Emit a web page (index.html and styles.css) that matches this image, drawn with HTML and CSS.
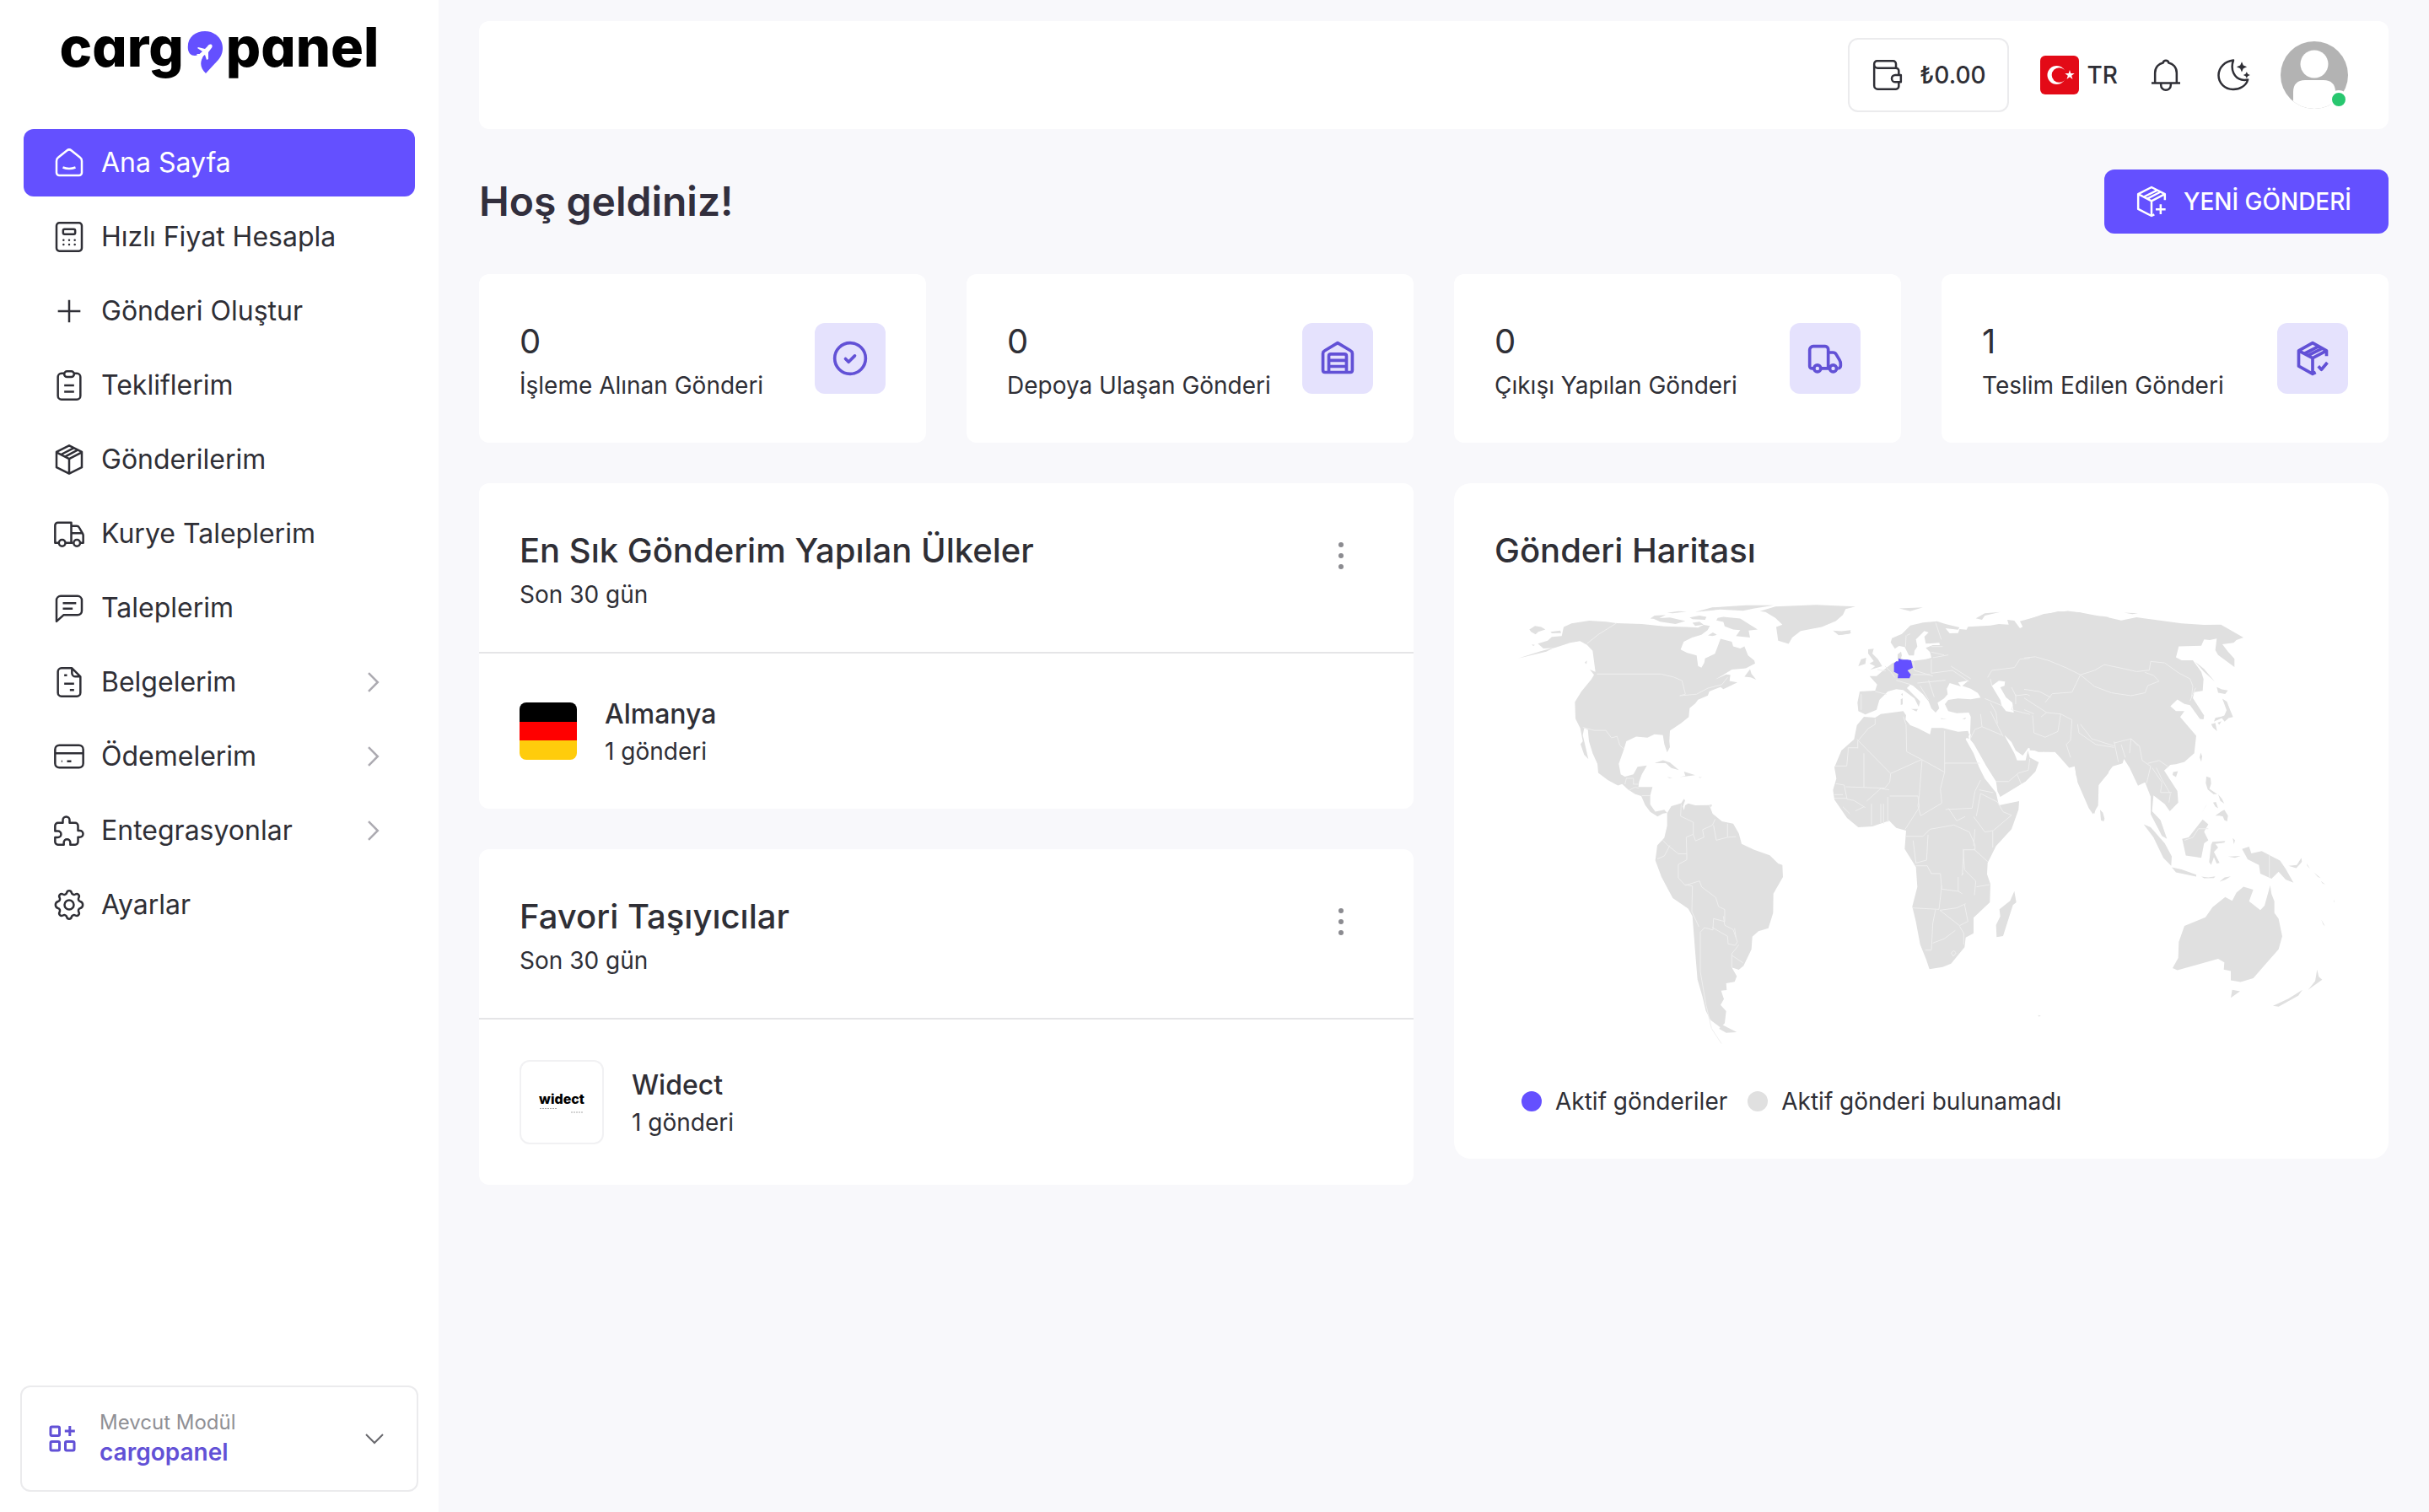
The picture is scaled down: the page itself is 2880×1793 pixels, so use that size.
FILE: index.html
```html
<!DOCTYPE html>
<html lang="tr">
<head>
<meta charset="utf-8">
<meta name="viewport" content="width=device-width, initial-scale=1">
<title>cargopanel</title>
<link rel="stylesheet" href="styles.css">
</head>
<body>
<div class="layout">
  <aside class="sidebar">
    <a class="logo" href="#" aria-label="cargopanel"><span>carg</span><svg class="logo-pin" viewBox="0 0 42 52" aria-hidden="true"><path d="M1 23C-1 9 9 1 21 1c12 0 21 9 21 20 0 7-3 12-7 16L22 51c-5-5-7-10-5-16 1-4 4-6 3-9-2-3-5 4-11 4-5 0-7-3-8-7z" fill="#6450ff"/><path d="M29 17c-2-1-4 0-5 2l-3 3-8-2-1 1 6 4-3 3-3 0-1 1 4 2 1 4 1-1 1-3 3-2 2 6 2-1 0-8 3-4c2-2 2-4 1-5z" fill="#fff"/></svg><span>panel</span></a>
    <nav class="nav">
      <a class="nav-item active" href="#"><svg class="icon" viewBox="0 0 24 24"><path d="M3 10.800c0-1 .4-1.900 1.200-2.500L10.400 3.300a2.500 2.500 0 0 1 3.200 0l6.200 5c.8.600 1.200 1.500 1.200 2.500V19a2 2 0 0 1-2 2H5a2 2 0 0 1-2-2zM7.500 15.300c2.600 1 6.400 1 9 0"/></svg><span>Ana Sayfa</span></a>
      <a class="nav-item" href="#"><svg class="icon" viewBox="0 0 24 24"><rect x="3" y="2" width="18" height="20" rx="2"/><rect x="7.700" y="6.500" width="8.600" height="3.500" rx="1"/><path stroke-linecap="round" d="M8 14.200v.01M12 14.200v.01M16 14.200v.01M8 17.400v.01M12 17.400v.01M16 17.400v.01"/></svg><span>Hızlı Fiyat Hesapla</span></a>
      <a class="nav-item" href="#"><svg class="icon" viewBox="0 0 24 24"><path d="M12 4v16M4 12h16"/></svg><span>Gönderi Oluştur</span></a>
      <a class="nav-item" href="#"><svg class="icon" viewBox="0 0 24 24"><path d="M8.500 3.500H6.500a2.500 2.500 0 0 0-2.500 2.500V19.500a2.500 2.500 0 0 0 2.500 2.500h11a2.500 2.500 0 0 0 2.500-2.500V6a2.500 2.500 0 0 0-2.500-2.500h-2M8.500 12h7M8.500 16.500h7"/><rect x="8.500" y="2" width="7" height="4" rx="2"/></svg><span>Tekliflerim</span></a>
      <a class="nav-item" href="#"><svg class="icon" viewBox="0 0 24 24"><path d="M12 2l9 4.500v11L12 22l-9-4.500v-11zM3 6.800l9 4.700 9-4.700M12 11.500V22M6.200 8.400l9-4.600M9 10l9-4.800"/></svg><span>Gönderilerim</span></a>
      <a class="nav-item" href="#"><svg class="icon" viewBox="0 0 24 24"><path d="M4.500 18.500H2V6a2 2 0 0 1 2-2h9.500v14.500h-4M13.500 6.500h3.800a2 2 0 0 1 1.800 1l2.600 4.500c.2.400.3.800.3 1.200v5.300h-2M13.500 11.500h8M14.500 18.500h-1"/><circle cx="7" cy="18.500" r="2.300"/><circle cx="17.500" cy="18.500" r="2.300"/></svg><span>Kurye Taleplerim</span></a>
      <a class="nav-item" href="#"><svg class="icon" viewBox="0 0 24 24"><path d="M3 21.500V6.500a3 3 0 0 1 3-3h12a3 3 0 0 1 3 3v7.500a3 3 0 0 1-3 3H8zM7.500 8.500h9.500M7.500 12.500h7"/></svg><span>Taleplerim</span></a>
      <a class="nav-item" href="#"><svg class="icon" viewBox="0 0 24 24"><path d="M14 2H6.500A2.500 2.500 0 0 0 4 4.500v15A2.500 2.500 0 0 0 6.500 22h11a2.500 2.500 0 0 0 2.500-2.500V8zM14 2v3.500A2.500 2.500 0 0 0 16.500 8H20M8.500 7h2M8.500 13h7M12.500 17.500h3"/></svg><span>Belgelerim</span><svg class="chevron" viewBox="0 0 24 24"><path d="M9 5.500l6.500 6.500L9 18.500"/></svg></a>
      <a class="nav-item" href="#"><svg class="icon" viewBox="0 0 24 24"><rect x="2" y="4" width="20" height="16" rx="3"/><path d="M2 9.700h20M6.500 15.500h.6M10.500 15.500h3"/></svg><span>Ödemelerim</span><svg class="chevron" viewBox="0 0 24 24"><path d="M9 5.500l6.500 6.500L9 18.500"/></svg></a>
      <a class="nav-item" href="#"><svg class="icon" viewBox="0 0 24 24"><path d="M2 9.500V8.500a2 2 0 0 1 2-2h3.500V4.500a2.300 2.300 0 0 1 4.800 0v2h4a2 2 0 0 1 2 2v3.500h1.300a2.300 2.300 0 0 1 0 4.600h-1.300V20a2 2 0 0 1-2 2h-3.500v-1.500a2.300 2.300 0 0 0-4.600 0V22H4a2 2 0 0 1-2-2v-3.200h2a2.200 2.200 0 0 0 0-4.500H2z"/></svg><span>Entegrasyonlar</span><svg class="chevron" viewBox="0 0 24 24"><path d="M9 5.500l6.500 6.500L9 18.500"/></svg></a>
      <a class="nav-item" href="#"><svg class="icon" viewBox="0 0 24 24"><circle cx="12" cy="12" r="3.300"/><path d="M10.300 3.400c.5-1.900 2.900-1.900 3.400 0 .3 1.200 1.600 1.700 2.700 1.100 1.700-1 3.400.7 2.400 2.400-.6 1.100-.1 2.400 1.100 2.700 2.400.8 2.400 4 0 4.800-1.200.3-1.700 1.600-1.100 2.700 1 1.700-.7 3.400-2.400 2.400-1.100-.6-2.400-.1-2.700 1.100-.5 1.900-2.900 1.900-3.400 0-.3-1.200-1.600-1.700-2.700-1.100-1.700 1-3.400-.7-2.400-2.400.6-1.100.1-2.400-1.100-2.700-2.400-.8-2.400-4 0-4.800 1.200-.3 1.700-1.600 1.100-2.700-1-1.700.7-3.400 2.400-2.400 1.100.6 2.400.1 2.700-1.100z"/></svg><span>Ayarlar</span></a>
    </nav>
    <button class="module" type="button">
      <svg class="module-icon" viewBox="0 0 32 32"><rect x="2" y="2" width="10.500" height="10.500" rx="1.500"/><rect x="2" y="19.500" width="10.500" height="10.500" rx="1.500"/><rect x="19.500" y="19.500" width="10.500" height="10.500" rx="1.500"/><path d="M24.800 1v12M18.800 7h12"/></svg>
      <span class="module-text"><span class="module-label">Mevcut Modül</span><strong class="module-name">cargopanel</strong></span>
      <svg class="module-chevron" viewBox="0 0 24 24"><path d="M2 7l10 10L22 7"/></svg>
    </button>
  </aside>

  <main class="main">
    <header class="topbar">
      <button class="wallet" type="button"><svg class="icon" viewBox="0 0 24 24"><path d="M18 6.800V4a2 2 0 0 0-2-2H4.500a2 2 0 0 0-2 2v15.500a2.500 2.500 0 0 0 2.500 2.500h13a2 2 0 0 0 2-2V17M2.500 4.500a2.500 2.500 0 0 0 2.500 2.500h13a2 2 0 0 1 2 2V12M21.500 12v5h-4a2.500 2.500 0 0 1 0-5z"/></svg><span>₺0.00</span></button>
      <button class="lang" type="button"><svg class="flag-tr" viewBox="0 0 46 46" aria-hidden="true"><rect width="46" height="46" rx="6" fill="#e30a17"/><circle cx="19.500" cy="23" r="11" fill="#fff"/><circle cx="22.500" cy="23" r="8.800" fill="#e30a17"/><path d="M35 17l1.300 4.100h4.400l-3.500 2.600 1.300 4.200-3.500-2.600-3.500 2.600 1.300-4.200-3.500-2.600h4.400z" fill="#fff"/></svg><span>TR</span></button>
      <button class="icon-button" type="button" aria-label="Bildirimler"><svg class="icon" viewBox="0 0 24 24"><path d="M1.800 17.700h20.400M4.300 17.500V10.500C4.300 6.500 7 3.800 10 3.300c.2-1 1-1.600 2-1.600s1.800.6 2 1.600c3 .5 5.700 3.200 5.700 7.200v7M8.500 18v1.200a3.500 3.500 0 0 0 7 0V18"/></svg></button>
      <button class="icon-button" type="button" aria-label="Tema"><svg class="icon" viewBox="0 0 24 24"><path d="M12 1.500C6 2.200 1.500 6.500 1.500 12.200c0 5.600 4.500 10 10.300 10 4.800 0 9.300-2.500 10.500-6.900-1.500.3-3 .4-4.500 0-5-1.200-8.200-7-5.800-13.800z"/><path class="solid" d="M18 2.500l1.100 2.600 2.600 1.100-2.600 1.100-1.100 2.600-1.100-2.600-2.600-1.100 2.600-1.100zM21.500 9.700l.8 1.600 1.600.7-1.600.7-.8 1.600-.8-1.600-1.600-.7 1.600-.7z"/></svg></button>
      <button class="avatar" type="button" aria-label="Hesap"><svg viewBox="0 0 80 80"><defs><clipPath id="round"><circle cx="40" cy="40" r="40"/></clipPath></defs><g clip-path="url(#round)"><rect width="80" height="80" fill="#b3b3b3"/><circle cx="40" cy="27" r="16.500" fill="#fff"/><path d="M15 80V60c0-9 5-14 14-14h22c9 0 14 5 14 14v20z" fill="#fff"/></g></svg><span class="status"></span></button>
    </header>

    <div class="page-head">
      <h1>Hoş geldiniz!</h1>
      <button class="primary" type="button"><svg class="icon" viewBox="0 0 24 24"><path d="M21.500 11V6.700L12 1.800 2.500 6.700v10.600l9.500 4.900 2-1M2.500 6.700l9.500 4.900 9.500-4.900M12 11.600v10.600M6.500 8.700L16 4M9 10l9.500-4.900M18.500 14v7M15 17.500h7"/></svg><span>YENİ GÖNDERİ</span></button>
    </div>

    <section class="stats">
      <article class="card stat"><div><p class="stat-value">0</p><p class="stat-label">İşleme Alınan Gönderi</p></div><span class="stat-icon"><svg viewBox="0 0 24 24"><circle cx="12" cy="12" r="10"/><path stroke-linecap="round" d="M9 12.300l2 2 4-4"/></svg></span></article>
      <article class="card stat"><div><p class="stat-value">0</p><p class="stat-label">Depoya Ulaşan Gönderi</p></div><span class="stat-icon"><svg viewBox="0 0 24 24"><path d="M2.500 19.700V8.700c0-.7.400-1.300 1-1.600L12 2l8.500 5.100c.6.300 1 .9 1 1.600v11c0 .8-.6 1.300-1.300 1.300H3.800c-.7 0-1.300-.5-1.300-1.300zM6.300 21V10.500c0-.8.500-1.300 1.300-1.300h8.800c.8 0 1.300.5 1.300 1.300V21M6.300 13.300h11.400M6.300 17.200h11.400"/></svg></span></article>
      <article class="card stat"><div><p class="stat-value">0</p><p class="stat-label">Çıkışı Yapılan Gönderi</p></div><span class="stat-icon"><svg viewBox="0 0 24 24"><path d="M4.500 18.500H3.500a1.500 1.500 0 0 1-1.500-1.500V6.500A2.300 2.300 0 0 1 4.300 4.200h7.700a2 2 0 0 1 2 2v12.300h-4.500M14 8.200h3c1 0 1.700.4 2.200 1.300l2.100 3.500c.5.800.7 1.500.7 2.400v1.400a1.700 1.700 0 0 1-1.700 1.700"/><circle cx="7" cy="18.500" r="2.200"/><circle cx="17.200" cy="18.500" r="2.200"/></svg></span></article>
      <article class="card stat"><div><p class="stat-value">1</p><p class="stat-label">Teslim Edilen Gönderi</p></div><span class="stat-icon"><svg viewBox="0 0 24 24"><path d="M21 10.500V7L12 2 3 7v10l9 5 2-1M3 7l9 4.800L21 7M12 11.800V22M6.500 9L16 4.200M9 10.200l9.500-4.800M15.700 17l2 2.200 3.800-4.500"/></svg></span></article>
    </section>

    <div class="columns">
      <div class="stack">
        <section class="card">
          <header class="card-head"><div><h2>En Sık Gönderim Yapılan Ülkeler</h2><p>Son 30 gün</p></div><button class="more" type="button" aria-label="Menü"><svg viewBox="0 0 8 34"><circle cx="4" cy="4" r="3"/><circle cx="4" cy="17" r="3"/><circle cx="4" cy="30" r="3"/></svg></button></header>
          <div class="entry"><svg class="flag-de" viewBox="0 0 68 68" aria-hidden="true"><defs><clipPath id="fr"><rect width="68" height="68" rx="8"/></clipPath></defs><g clip-path="url(#fr)"><path d="M0 0h68v23H0z"/><path d="M0 23h68v22H0z" fill="#f00"/><path d="M0 45h68v23H0z" fill="#ffcc0c"/></g></svg><div><h3>Almanya</h3><p>1 gönderi</p></div></div>
        </section>
        <section class="card">
          <header class="card-head"><div><h2>Favori Taşıyıcılar</h2><p>Son 30 gün</p></div><button class="more" type="button" aria-label="Menü"><svg viewBox="0 0 8 34"><circle cx="4" cy="4" r="3"/><circle cx="4" cy="17" r="3"/><circle cx="4" cy="30" r="3"/></svg></button></header>
          <div class="entry"><span class="brand">widect<svg viewBox="0 0 54 8" aria-hidden="true"><path d="M1 1.500h20M38 6h14"/></svg></span><div><h3>Widect</h3><p>1 gönderi</p></div></div>
        </section>
      </div>

      <section class="card map-card">
        <h2>Gönderi Haritası</h2>
        <svg class="map" viewBox="0 0 1012 601" role="img" aria-label="Gönderi Haritası">
          <!-- Americas -->
          <g transform="translate(8 5) scale(.33333 .35714)">
            <path d="M130 205l35-10 15-12 35-3 7-30 28-12 63-9 60 3 37 5 90 3 80 8 80 2 40 2 20-9 22 3-8 14-22 16-33 9-30 14-11 26 22 10 35 9 5 35 12 6 10-16 3-15 35-15 10-25 10-25 40 10 5 15 25 7 15-7 13 30 22 17 3 10-33 16-50 4-30 18-30 16 40-18 15 2-3 20 28 5-50 22-10-7-40 15-5 13-35 14-10 13-20 15-3 30-27 20-40 25-2 35 2 20-10 17-10-27-5-30-30-3-25 11-40-3-35 15-10 30-17 45 7 35 15 8 30-8 15-25 33-4-18 29-10 25-2 17h50l-8 28v30l18 24 32-6 10 10-15 2-19 10-26-15-18-23-14-30-23-7-25-15-20-18-15 5-35-17-35-25-3-30-17-35-13-40-4-38-13-5-5 23 10 40 10 40-15-15-13-35 8-10-9-43-17-32-2-55 23-35 35-40 10-15-15-18 20 8-5-35-5-35-20-20-25-12-35 5-55 17-40 2z"/>
            <path d="M60 254l80-24 50-12-30 14zM100 158l20-12 22 4 15 8-25 8-10 8-16-8zM175 166l35-4 3 8-33 1zM297 268l8-7-2 12zM108 208l12 1-6 4z"/>
            <path d="M590 768l15-23 35-10 10-15 4 6-8 20 4 12 4-16 11-6 25 6 50-1 12 29 33 25 40 8 20 32 10 35 45 20 55 18 30 27 15 5 2 40-34 55-1 65-17 50-35 10-22 18-3 42-28 55-17 13-25-8 18 30-8 18-30 5 2 22-20 2 10 28-12 20 20 20-5 40-15 15-35-25-17-30-13-50-17-55-8-90-10-120-15-25-55-35-40-70-22-55 7-50 25-25 10-40zM785 1470l53 25-38 2-25-13zM740 740l10 0-4 9z"/>
            <path d="M920 97l55-15 145-6 140 6-35 8-10 20-25 20-50 20-75 13-30 22-13 21-37-11-7-45 22-8-25-22-35-20z"/>
            <path d="M1180 162l30 2 33-4-3 12-40 5zM545 602l30-10 25 8 32 25-27-7-20-16zM650 630l40 12-55 6 20-4zM590 648l20 2-12 2zM702 648l12 1-8 2zM885 290l5 15 17 20-20-8-22-2z"/>
            <path d="M770 120l20-4 60 6 62 36-32 4 5 23-50-5 15-20-25-2-30-10-5-15-25-5zM540 122l60-4 55 12-35 10-55-8zM530 122l15-10 40-2-30 14zM735 178l18-10 14 8-15 4zM690 100l60-15 120-7h100l-70 10-40 8-80-4zM590 103l40-6 30 2-50 5zM670 118l35-6 25 4-5 10-45-2zM680 136l25-4 15 10-30 4z"/>
            <path d="M1415 88l85-3-45 12z"/>
            <g class="borders"><path d="M410 137l-65 38-40 30M340 306h228l45 10 30 12 12 45-20 5 60-5 40-20 50-12 20-24M290 483l40 10h42l20 25 20-5 10 30 15 12M440 672l5-20 25 0v20h18M455 692l20-10 15 3M500 710l30 0M640 738l-2 40 45 20v40l-25 10 2 55-30 0-40-30-15-15M683 838l8 22 30-12-5-25 35-15 10-20M755 808l10 50 40-10 0-45M805 848l30-2M600 875l-20 35-25 10M660 903v20l-30 15v45l25 25 50-15 8 20 50 35 10 30 22 10v40l-40-10-2 38-30-8-15 15v130l20 110 20 80 35 50M655 1005l25 5-2 85 25 50M790 1110l5 30 30 15 15 40-8 12-25-5-2-25-55-30M830 1150l5 30M845 1205l-25 30 0 45M820 1240l40 25"/></g>
          </g>
          <!-- Europe, western Asia and Africa -->
          <g transform="translate(368 5) scale(.33333)">
            <path d="M470 140l30 10 50 12-5 8-45-5 15 18 30-1 5-14 25 2 5-10 80-5 30-5 35 2-5-17 25 3 20 27 10-5-10-20 65-18 70-17 75 3 75 14 30 3v555l-38 45v50l-12 50-15-15-30-80-20-40-5-35-15 3-25-23-30-30h-60l-35-15-20 28-25-18-15-30-25-25 10 20 25 45 10 25h30l8-35 7 25 32 17-12 33-35 35-90 55-10-20-5-35-35-55-25-45-20-35-13-15 3-80-7-15-43 2-30-7-12-25 12-15 35-5 45 3 35-6-10-17-25-15-30-10 23-20-38 8 10 14-40-12-10 20 3 20-13 15-23 15 6 20-13 15-15-15-10-25-20-25-35-30-10-5-12 13 47 47-5 20-15-30-40-30-25-3-30 8-30 30-10 35-40 17-25-12-3-30 8-40 55-3 7-22-27-30h25l30-25 25-20 20-10 10-10 10 5 30 7 50-7 20-5-5-20-15-15 25-10h25l-2-8-48 3-5-25 15-15-15-5-30 30 5 25-10 15-2 17h-18l-15-30-20-4-15 10-15-23 5-15 35-15 30-30 45-10z"/>
            <path d="M330 258l12-10 3 14-5 14h-10zM225 240l20-2-5 17 20 20 15 25-43 13 18-13-20-10 15-8-20-27zM190 300l10-25 18-5-3 22zM608 130l32-18 55-5-55 13-10 15zM342 400l6-4v10zM341 418l7-4v22l-7 2zM378 452h24l-5 9zM483 485l22 2-20 1zM560 487l14-4-5 6zM103 176l25 3 33-4 3 7-35 6z"/>
            <path d="M210 480l40 3 20-13 80-10 10 15-2 15 17 20 25 10 45 23 5-23h40l55 13 35-3 10 30-15-5-3 5 28 50 20 50 20 40 40 50 10 45 72-15-2 30-25 70-55 60-30 60-2 40 12 35-2 65-58 55v55l-28 15-4 35-48 58-30 12-47 8-11-33-22-55-15-80-13-55 18-70-5-70-40-65 5-65-35-10-25-25-60 20-50 3-40-33-45-65-5-35 12-40-7-40 25-60 45-40 10-50zM745 1100l7 40-12 10-35 110-23 4-2-44 15-30-3-25 38-30z"/>
            <path class="water" d="M665 370l25-18 22 3-2 15-15 5 20 35 23 20 5 35-28-5-15-20-5-20-15-25zM568 550l18 20-4-22 8-8-2 32z"/>
            <g class="borders">
              <path d="M185 560l120 122-3 30-18 22-138-5M210 610v122M188 590l-34 0v10l-5 55h-42M250 487v20l-25 15-37 45v25M305 682l110-50-53-28-2-95-10-30M415 632l82 45V530M497 645h125M497 677l-15 60 5 50-75 45-10-35 5-40 10-125M110 718l30 5 10 50 25 5 40 25M300 740l-30-5-50 45M302 762h100l5 40-50 78M105 757h30M105 770h45M280 790v70M237 790v75M270 790v68M295 765v90M210 800l-30 15M135 800l25 25M360 905h60l25-25 85-15 55 25 20 45 0 18h-40l-5 90M385 920l10 80 38-10 5-90M395 1010h40l15 28h32l5 55 60 8M545 1050v50l15 10M563 950l5 75 40 40-5 50M487 1080l-10 85-95-5M465 1165l-10 50-5 95-22 0M480 1168l60-8 32-15M480 1168l70 55 30-15-12-60M550 1225l15 25 0 40M455 1285l40-15 40-30M600 950l50 45M610 1085l48-8M668 885v60M600 835l40 55 30-5 65-55-30-12-20-35-60-30-15 80M510 805l30 45 30-15M500 810l95-5 10-60 20-40M520 1320l10-8 8 8-10 12zM620 740l50 10M563 1035l-5 10M605 880l-5 60"/>
              <path d="M680 710h45l35-30 35-10 5-40M755 685l15 35M590 555l15-30 25-10 70 30M625 470l5 45M660 460l45 90M360 190l-2 40M375 185l-12 5M465 145l20 60M450 230l40 0M450 250l45 10M455 270l55-10M385 280l5 35 65 20M450 275v50l75-10 60 40M520 300l70 45M385 330l60 0M400 360l100-10M440 350l20 60M410 370l30 50M325 350l50 15M258 312l30 5M285 300l20 20 15 20M250 390l40 10M200 400v55M385 290l-10-10M650 340l15-25 80-10 20-30 60-5 65 25 80 20M660 345l5 25M735 375l15 30 40-5 80 45M740 440l-5 15 80 20M815 470l90 0 0 40-25 45-50 0-15-80M975 330l-30 60-60 15-20 35M850 555v50M905 470l40 30-5 60-20 20 20 50M960 490l50 60 70 25M980 505l45 60 55 20M640 415l60 25M660 430l20 35 5 40M750 400v35"/>
            </g>
            <path class="active" d="M333 272l12 5 20 0 13 2 6 26-19 10 12 15-5 13h-42l2-15-15-8v-30l8-7 8 0z"/>
          </g>
          <!-- Eastern Asia and Oceania -->
          <g transform="translate(628 5) scale(.33333 .34439)">
            <path d="M205 107l-15 11 90 0 65 15 55-11 60 8 100 13 80 5 60-1 80 45-25 8-10 10-40 5 20 25 23 25v28l-58-41-10-17 5-40-25 5-20-2-10 22-80 2-10 38 20 10h40l30 40 8 25-3 40-30 5-5 20 40 60-2 13-13-1-35-47-20-5-25-15-25 23 20 17h30l-15 20 57 65-7 60-35 30-30 8-20 2-22 20 47 70 3 40-30 30-18-25-40-30-5 55 30 30 23 65-18-10-40-75v-60l-20-50-25 12-30-62-20-30-5 15-35 10-50 65-2 70-18 30-15-20-40-90-10-55-20 5-50-55-90-5V128l50-18 85-10zM50 86l70 7M355 106l50 2-20 3z"/>
            <path d="M608 275l32 25 38 43-38-33zM685 362l18 8 22 4-10 12-25-4zM705 402l16 10 12 30 10 23-16 4-14 12-10-12-28 12 5-13 22-4 10-4 8-18zM665 490l15-4 6 28-14-12zM688 485l14-5-8 12zM628 588l5 12-3 20-6-15zM530 655l17-3-7 20-12-7zM270 785l10 10 6 20-3 10-10-4zM648 670l15 5 2 20-6 18 28 18-14 0-20-16-7-22zM690 732l14 16 8 16-14-10zM672 760l10-2 8 22-10-6zM680 805l22-15 10-5 13 20-3 20-10-5-5-12-12-3zM650 765l-18 30 14-22z"/>
            <path d="M425 835l25 10 50 55 25 45-2 33-28-28-35-70zM525 983l35 7 52 18v7l-72-15zM562 885l23-5 50-62 20 17-15 25 15 30-15 10-10 50-55-8zM665 905l5-10 45-3-3 6-32 4 10 13-15 15 20 38-10 2-10-22-10 27-7-10zM630 1015l25 3 25-4-5 6-35 1zM695 1032l18-14 22-4-20 12zM742 882l8 8-4 14zM725 946l45-2-20 6zM775 920l25-8 8 23 37-8 65 33 20 28 28 48-28-11-25-27-25 24-40-17-5-30-40-20zM940 978l30-3 16-25 2 14-20 22zM1005 970l12 18-10-10zM1030 1000l25 20-10-4zM1055 1030l16 12-10-4z"/>
            <path d="M875 1045l5 30 10 25v40l15 20 13 60-13 45-45 50-45 50-45 13-35-6v-32l-25-5 2-25-22-12-80 22-65 17-17-7 20-35 2-55 20-55 75-30 25-35 45-35 25 13 15-28 25-20 35 10-15 40 40 30 15-15zM740 1405l28 5-33 22zM1042 1335l6 25 12 10-50 35 25-30zM990 1405l-15 20-70 38-20-3 55-25zM1057 1163l14 24-8-8zM1102 1095l2 8-3-2zM50 1492l10 3-9 2z"/>
            <g class="borders"><path d="M0 262l40-4 50 14 60 24 50 24 50-15 35-20 60 12 55 12 45-5 5-30 50 5 50 35 40 20 10 25-5 40M200 320l50 40 60 22 70 10 50-10 10-25 40-15-20-20-30-10M200 320l-30 60-70 5-25 30M30 460l5 60 40 15 45-20 10-60-50-5-20 15M130 455l40 20-5 70-15 15 15 45M200 490l40 50 80 25M190 490l5 30 60 40 65 10M320 550l15 70M345 560l15 45M320 555l60-15 25 25M375 590l5-50 30 25 10 50 30 20-15 60M440 625l40-10 30 20M470 640l20 40 30 50-5 30M455 640l35 50-5 35 40 0M590 410l20-45M570 890l30-10 20-30 35 0M872 940v80M0 370l55 8 40 20M0 400l80 50M0 440l35 15"/></g>
          </g>
        </svg>
        <ul class="legend"><li><span class="dot dot-active"></span>Aktif gönderiler</li><li><span class="dot"></span>Aktif gönderi bulunamadı</li></ul>
      </section>
    </div>
  </main>
</div>
</body>
</html>
```
FILE: styles.css
```css
* { box-sizing: border-box; margin: 0; padding: 0; }

:root {
  --primary: #6450ff;
  --accent: #6251d6;
  --text: #2f2f36;
  --border: #ebebed;
  --page: #f8f8fb;
}

body {
  background: var(--page);
  color: var(--text);
  font-family: Inter, "Noto Sans", sans-serif;
  font-size: 28px;
  line-height: 44px;
}

button { font: inherit; color: inherit; background: none; border: 0; cursor: pointer; }
a { color: inherit; text-decoration: none; }
ul { list-style: none; }
svg { display: block; flex: none; }

.icon { width: 40px; height: 40px; fill: none; stroke: currentColor; stroke-width: 1.5; stroke-linejoin: round; }
.icon .solid { fill: currentColor; stroke: none; }

.layout { display: flex; min-height: 100vh; }

.sidebar {
  width: 520px;
  flex: none;
  display: flex;
  flex-direction: column;
  background: #fff;
  padding: 16px 24px 24px;
}

.logo {
  display: flex;
  align-items: center;
  justify-content: center;
  gap: 4px;
  height: 80px;
  font-size: 65px;
  font-weight: 800;
  line-height: 80px;
  color: #000;
  font-feature-settings: "cv11";
}
.logo-pin { width: 42px; height: 52px; margin-top: 12px; }

.nav { display: flex; flex-direction: column; gap: 8px; padding: 57px 4px 0; }
.nav-item {
  display: flex;
  align-items: center;
  gap: 18px;
  height: 80px;
  padding: 0 30px 0 34px;
  border-radius: 12px;
  font-size: 32px;
}
.nav-item.active { background: var(--primary); color: #fff; }
.chevron { width: 40px; height: 40px; margin-left: auto; fill: none; stroke: #acaab1; stroke-width: 1.5; }

.module {
  display: flex;
  align-items: center;
  gap: 28px;
  height: 126px;
  margin-top: auto;
  padding: 0 32px;
  border: 2px solid var(--border);
  border-radius: 12px;
  text-align: left;
}
.module svg { fill: none; stroke-width: 2; }
.module-icon { width: 32px; height: 32px; stroke: var(--accent); }
.module-icon rect, .module-icon path { stroke-width: 3; }
.module-text { display: flex; flex-direction: column; padding-bottom: 4px; }
.module-label { font-size: 24px; line-height: 36px; color: #909095; }
.module-name { font-size: 28px; line-height: 34px; font-weight: 600; color: var(--accent); }
.module-chevron { width: 24px; height: 24px; margin-left: auto; margin-right: 6px; stroke: #68686d; }

.main { flex: 1; min-width: 0; display: flex; flex-direction: column; gap: 48px; padding: 25px 48px 48px; }

.topbar {
  display: flex;
  align-items: center;
  justify-content: flex-end;
  height: 128px;
  padding: 0 48px;
  background: #fff;
  border-radius: 12px;
  font-weight: 500;
}
.wallet {
  display: flex;
  align-items: center;
  gap: 18px;
  height: 88px;
  padding: 0 25px;
  border: 2px solid var(--border);
  border-radius: 12px;
  font-weight: 500;
}
.lang { display: flex; align-items: center; gap: 10px; margin: 0 37px 0 37px; font-weight: 500; }
.flag-tr { width: 46px; height: 46px; }
.icon-button { margin-right: 40px; }
.icon-button + .avatar { margin-left: -4px; }
.avatar { position: relative; width: 80px; height: 80px; }
.avatar svg { width: 80px; height: 80px; }
.status { position: absolute; right: 0; bottom: 0; width: 22px; height: 22px; border: 3px solid #fff; border-radius: 50%; background: #28c76f; }

.page-head { display: flex; align-items: center; justify-content: space-between; }
h1 { font-size: 48px; line-height: 72px; font-weight: 600; color: #322f3d; }
.primary {
  display: flex;
  align-items: center;
  gap: 18px;
  height: 76px;
  padding: 0 44px 0 36px;
  border-radius: 12px;
  background: var(--primary);
  color: #fff;
  font-weight: 500;
}

.card { background: #fff; border-radius: 12px; }

.stats { display: grid; grid-template-columns: repeat(4, 1fr); gap: 48px; }
.stat { display: flex; align-items: center; justify-content: space-between; padding: 48px; }
.stat-value { font-size: 40px; line-height: 64px; }
.stat-label { line-height: 40px; }
.stat-icon { display: grid; place-items: center; width: 84px; height: 84px; border-radius: 12px; background: #e5e2fd; }
.stat-icon svg { width: 44px; height: 44px; fill: none; stroke: var(--accent); stroke-width: 2; stroke-linejoin: round; }

.columns { display: grid; grid-template-columns: repeat(2, 1fr); gap: 48px; align-items: start; }
.stack { display: flex; flex-direction: column; gap: 48px; }
h2 { font-size: 40px; line-height: 64px; font-weight: 500; }
h3 { font-size: 32px; line-height: 48px; font-weight: 500; }
.card-head { display: flex; justify-content: space-between; padding: 48px; border-bottom: 2px solid #e5e5e7; }
.card p { line-height: 40px; }
.card .stat-value { line-height: 64px; }
.more { width: 76px; height: 76px; display: grid; place-items: center; }
.more svg { width: 8px; height: 34px; fill: #8b8b90; }
.entry { display: flex; align-items: center; gap: 33px; padding: 48px; }
.flag-de { width: 68px; height: 68px; }
.brand {
  display: flex;
  flex-direction: column;
  align-items: center;
  justify-content: center;
  width: 100px;
  height: 100px;
  border: 2px solid #f1f1f3;
  border-radius: 12px;
  font-size: 16px;
  line-height: 20px;
  font-weight: 800;
  color: #000;
}
.brand svg { width: 54px; height: 8px; stroke: #aaa; stroke-width: 1; stroke-dasharray: 2 1; }

.map-card { border-radius: 20px; padding: 48px; }
.map { width: 100%; height: auto; fill: #e0e0e0; }
.map .water { fill: #fff; }
.map .active { fill: var(--primary); }
.map .borders { fill: none; stroke: #efefef; }
.map .borders path { vector-effect: non-scaling-stroke; stroke-width: 1; }
.legend { display: flex; align-items: center; gap: 24px; padding-left: 32px; line-height: 40px; }
.legend li { display: flex; align-items: center; gap: 16px; }
.dot { width: 24px; height: 24px; border-radius: 50%; background: #e0e0e0; }
.dot-active { background: var(--primary); }
```
